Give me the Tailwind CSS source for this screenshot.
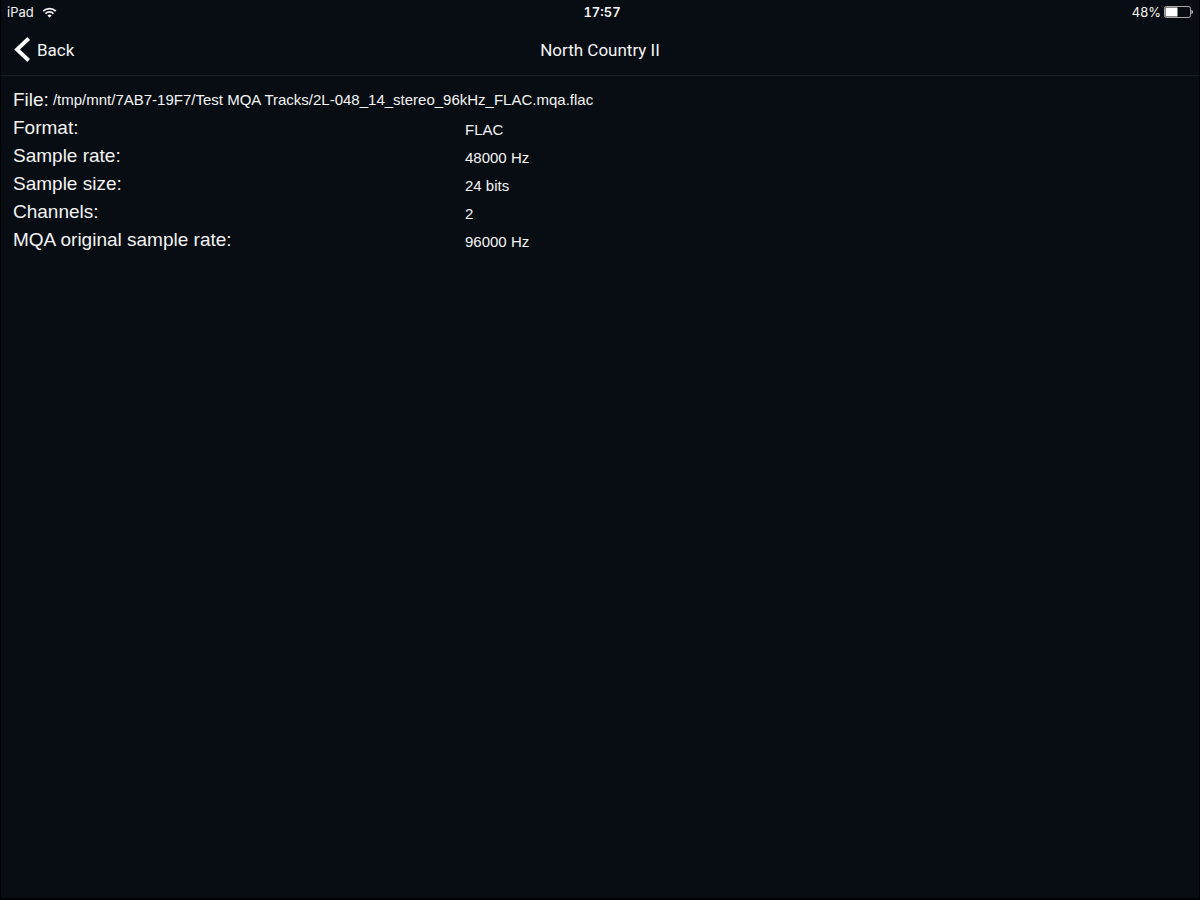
<!DOCTYPE html>
<html lang="en">
<head>
<meta charset="utf-8">
<meta name="viewport" content="width=device-width, initial-scale=1">
<title>North Country II</title>
<script src="https://cdn.jsdelivr.net/npm/@tailwindcss/browser@4"></script>
</head>
<body class="flex min-h-screen flex-col border-x border-b-2 border-black bg-[#080d13] font-['Liberation_Sans',Arial,sans-serif] text-[#f4f4f4]">
  <div class="grid h-6 grid-cols-3 items-center px-1.5 font-['Inter',sans-serif] text-[13px] leading-6">
    <div class="flex items-center gap-2">
      <span>iPad</span>
      <svg class="h-[11px] w-[15px]" viewBox="0 0 14 11" fill="none" stroke="currentColor" stroke-width="1.8" role="img" aria-label="Wi-Fi">
        <path d="M.7 4.1a9 9 0 0 1 12.6 0M3 6.6a5.7 5.7 0 0 1 8 0"/>
        <path d="M4.9 8.5a3 3 0 0 1 4.2 0L7 10.7Z" fill="currentColor" stroke="none"/>
      </svg>
    </div>
    <time class="pl-1 text-center font-semibold tabular-nums">17:57</time>
    <div class="flex items-center justify-end gap-[3px]">
      <span>48%</span>
      <svg class="h-3 w-[29px]" viewBox="0 0 29 12" role="img" aria-label="Battery">
        <rect x=".5" y=".5" width="26" height="11" rx="1.8" fill="none" stroke="#aaa"/>
        <path d="M1.5 1.5H13.500V10.500H1.500Z" fill="#fff"/>
        <path d="M27.500 4q1.500.3 1.500 2t-1.500 2Z" fill="#ddd"/>
      </svg>
    </div>
  </div>
  <header class="grid h-[52px] grid-cols-3 items-center border-b border-[#1a1f25] px-3 font-['Roboto',sans-serif] text-[17px] leading-6">
    <button type="button" class="flex items-center gap-1.5 justify-self-start">
      <svg class="h-[26px] w-[18px]" viewBox="0 0 18 26" fill="none" stroke="#fff" stroke-width="3.8" aria-hidden="true"><path d="M15.700 1.500 4 12.500 15.700 23.500"/></svg>
      <span>Back</span>
    </button>
    <h1 class="text-center">North Country II</h1>
  </header>
  <main class="px-3 pt-2.5">
    <dl class="grid grid-cols-[452px_1fr] text-[15px] leading-6">
      <div class="col-span-2 flex gap-1"><dt class="text-[19px] leading-7">File:</dt><dd class="pt-0.5">/tmp/mnt/7AB7-19F7/Test MQA Tracks/2L-048_14_stereo_96kHz_FLAC.mqa.flac</dd></div>
      <dt class="text-[19px] leading-7">Format:</dt><dd class="pt-1">FLAC</dd>
      <dt class="text-[19px] leading-7">Sample rate:</dt><dd class="pt-1">48000 Hz</dd>
      <dt class="text-[19px] leading-7">Sample size:</dt><dd class="pt-1">24 bits</dd>
      <dt class="text-[19px] leading-7">Channels:</dt><dd class="pt-1">2</dd>
      <dt class="text-[19px] leading-7">MQA original sample rate:</dt><dd class="pt-1">96000 Hz</dd>
    </dl>
  </main>
</body>
</html>
